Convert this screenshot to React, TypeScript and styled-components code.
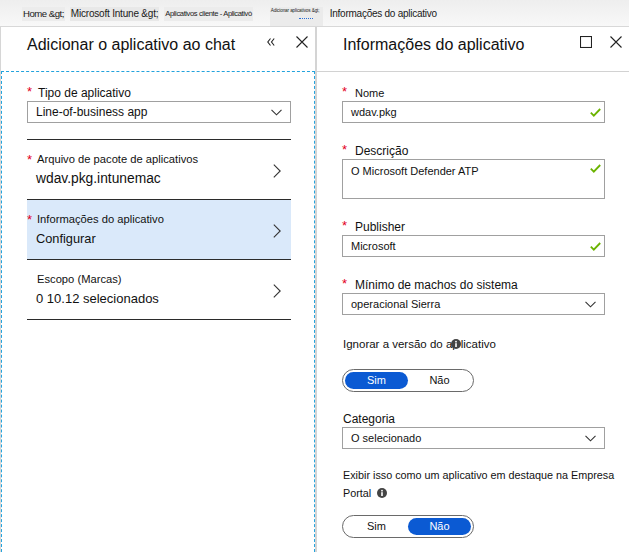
import React from "react";
import styled, { createGlobalStyle } from "styled-components";

const GlobalStyle = createGlobalStyle`
  html, body { margin: 0; padding: 0; background: #fff; }
  body { font-family: "Liberation Sans", Arial, sans-serif; color: #000; }
  * { box-sizing: border-box; }
`;

const Page = styled.div`
  width: 629px;
  height: 552px;
  display: flex;
  flex-direction: column;
  overflow: hidden;
  background: #fff;
`;

/* ---------- breadcrumb ---------- */
const Breadcrumb = styled.nav`
  height: 27px;
  flex: none;
  display: flex;
  align-items: center;
  padding: 2px 0 0 22px;
  background: linear-gradient(#eeeeee, #f8f8f8);
  border-bottom: 1px solid #d8d8d8;
  color: #1a1a1a;
`;

const Crumb = styled.span<{ $size: number; $ls: number; $bg?: string; $ml?: number }>`
  font-size: ${(p) => p.$size}px;
  letter-spacing: ${(p) => p.$ls}px;
  line-height: 14px;
  padding: 0 1px;
  margin-left: ${(p) => p.$ml ?? 6}px;
  background: ${(p) => p.$bg ?? "transparent"};
  white-space: nowrap;
  &:first-child { margin-left: 0; }
`;

const TinyCrumb = styled.span`
  align-self: stretch;
  margin: 5px 0 0 17px;
  width: 53px;
  background: #ebebeb;
  font-size: 4.6px;
  line-height: 8px;
  letter-spacing: -0.1px;
  padding-left: 1px;
  white-space: nowrap;
  overflow: hidden;
`;

const TinyDots = styled.span`
  display: block;
  margin: 3px 0 0 28px;
  width: 14px;
  height: 2px;
  border-top: 1px dotted #2a6fd6;
`;

/* ---------- blades ---------- */
const Blades = styled.div`
  flex: 1;
  display: flex;
  min-height: 0;
`;

const LeftBlade = styled.section`
  width: 317px;
  flex: none;
  display: flex;
  flex-direction: column;
  border-left: 1px solid #d6d6d6;
  border-right: 2px solid #d4d4d4;
`;

const RightBlade = styled.section`
  flex: 1;
  display: flex;
  flex-direction: column;
`;

const BladeHeader = styled.header<{ $line?: boolean }>`
  height: ${(p) => (p.$line ? 45 : 44)}px;
  flex: none;
  display: flex;
  align-items: flex-start;
  padding: 8px 7px 0 26px;
  border-bottom: ${(p) => (p.$line ? "1px solid #d2d2d2" : "none")};
`;

const BladeTitle = styled.h1`
  margin: 0;
  flex: 1;
  font-size: 16px;
  line-height: 20px;
  font-weight: normal;
  color: #111;
`;

const HeaderIcons = styled.div<{ $gap: number }>`
  display: flex;
  align-items: center;
  gap: ${(p) => p.$gap}px;
  padding-top: 1px;
`;

const IconBox = styled.span`
  display: inline-flex;
  align-items: center;
  justify-content: center;
  width: 12px;
  height: 12px;
`;

const LeftBody = styled.div`
  flex: 1;
  border: 1px dashed #23a3dd;
  border-bottom: none;
  padding: 13px 0 0 25px;
`;

const RightBody = styled.div`
  flex: 1;
  padding: 13px 0 0 25px;
`;

/* ---------- form parts ---------- */
const FieldLabel = styled.div<{ $mt?: number; $size?: number }>`
  display: flex;
  align-items: baseline;
  margin-top: ${(p) => p.$mt ?? 0}px;
  font-size: ${(p) => p.$size ?? 12}px;
  line-height: 16px;
  color: #111;
  white-space: nowrap;
`;

const Star = styled.span<{ $w: number }>`
  flex: none;
  width: ${(p) => p.$w}px;
  color: #e3001b;
  font-size: 13px;
  position: relative;
  top: -1px;
`;

const InputBox = styled.div<{ $w: number; $h?: number; $top?: boolean }>`
  width: ${(p) => p.$w}px;
  height: ${(p) => p.$h ?? 22}px;
  border: 1px solid #a0a0a0;
  display: flex;
  align-items: ${(p) => (p.$top ? "flex-start" : "center")};
  justify-content: space-between;
  padding: ${(p) => (p.$top ? "4px 3px 0 8px" : "0 3px 0 8px")};
  font-size: ${(p) => (p.$w > 263 ? 12 : 11)}px;
  line-height: 14px;
  color: #111;
  background: #fff;
`;

const SelectBox = styled(InputBox)`
  padding-right: 8px;
`;

const RowList = styled.div`
  width: 264px;
  margin-top: 16px;
  border-bottom: 1px solid #2b2b2b;
`;

const NavRow = styled.div<{ $active?: boolean }>`
  height: 60px;
  border-top: 1px solid #2b2b2b;
  background: ${(p) => (p.$active ? "#dae9fa" : "transparent")};
  display: grid;
  grid-template-columns: 10px 1fr 18px;
  grid-template-rows: 15px 18px;
  row-gap: 3px;
  padding-top: 12px;
  align-content: start;
`;

const RowStar = styled.span`
  grid-column: 1;
  grid-row: 1;
  color: #e3001b;
  font-size: 13px;
  line-height: 15px;
`;

const RowLabel = styled.span`
  grid-column: 2;
  grid-row: 1;
  font-size: 11.2px;
  line-height: 15px;
  color: #111;
  white-space: nowrap;
`;

const RowValue = styled.span<{ $size?: number }>`
  grid-column: 2;
  grid-row: 2;
  font-size: ${(p) => p.$size ?? 13.3}px;
  line-height: 18px;
  color: #111;
  white-space: nowrap;
  margin-left: -1px;
`;

const RowChevron = styled.span`
  grid-column: 3;
  grid-row: 1 / span 2;
  align-self: center;
  display: flex;
  margin-top: 2px;
`;

const PlainLabel = styled.div<{ $mt: number; $w?: number; $size?: number; $lh?: number }>`
  margin-top: ${(p) => p.$mt}px;
  width: ${(p) => p.$w ?? 263}px;
  font-size: ${(p) => p.$size ?? 11.5}px;
  line-height: ${(p) => p.$lh ?? 16}px;
  color: #111;
  padding-left: 1px;
`;

const Toggle = styled.div<{ $mt: number }>`
  margin-top: ${(p) => p.$mt}px;
  width: 132px;
  height: 23px;
  border: 1px solid #6a6a6a;
  border-radius: 12px;
  padding: 2px;
  display: grid;
  grid-template-columns: 1fr 1fr;
`;

const ToggleOption = styled.span<{ $on?: boolean }>`
  border-radius: 9px;
  background: ${(p) => (p.$on ? "#0b5ad3" : "transparent")};
  color: ${(p) => (p.$on ? "#fff" : "#111")};
  font-size: 11px;
  line-height: 17px;
  text-align: center;
`;

const InfoDot = styled.span<{ $ml: number }>`
  display: inline-flex;
  vertical-align: -1px;
  margin-left: ${(p) => p.$ml}px;
`;

/* ---------- icons ---------- */
const Chevron = () => (
  <svg width="11" height="7" viewBox="0 0 11 7">
    <polyline points="0.5,0.8 5.5,5.8 10.5,0.8" fill="none" stroke="#333" strokeWidth="1.1" />
  </svg>
);

const RightArrow = () => (
  <svg width="8" height="14" viewBox="0 0 8 14">
    <polyline points="0.8,0.6 7.2,7 0.8,13.4" fill="none" stroke="#333" strokeWidth="1.1" />
  </svg>
);

const CloseIcon = () => (
  <svg width="12" height="12" viewBox="0 0 12 12">
    <path d="M0.5 0.5 L11.5 11.5 M11.5 0.5 L0.5 11.5" stroke="#222" strokeWidth="1.1" fill="none" />
  </svg>
);

const MaxIcon = () => (
  <svg width="12" height="12" viewBox="0 0 12 12">
    <rect x="0.5" y="0.5" width="11" height="11" fill="none" stroke="#222" strokeWidth="1.1" />
  </svg>
);

const CollapseIcon = () => (
  <svg width="8" height="8" viewBox="0 0 8 8">
    <path d="M3.5 0.5 L0.8 4 L3.5 7.5 M7.2 0.5 L4.5 4 L7.2 7.5" stroke="#222" strokeWidth="1.1" fill="none" />
  </svg>
);

const Check = () => (
  <svg width="11" height="9" viewBox="0 0 11 9">
    <polyline points="0.8,4.6 3.8,7.6 10.2,1" fill="none" stroke="#6bb300" strokeWidth="1.8" />
  </svg>
);

const Info = () => (
  <svg width="10" height="10" viewBox="0 0 10 10">
    <circle cx="5" cy="5" r="5" fill="#444" />
    <rect x="4.2" y="4.2" width="1.6" height="3.8" fill="#fff" />
    <circle cx="5" cy="2.7" r="0.9" fill="#fff" />
  </svg>
);

export default function App() {
  return (
    <Page>
      <GlobalStyle />
      <Breadcrumb>
        <Crumb $size={9.6} $ls={-0.5} $bg="#ececec">Home &amp;gt;</Crumb>
        <Crumb $size={10} $ls={-0.2} $bg="#e8e8e8" $ml={5}>Microsoft Intune &amp;gt;</Crumb>
        <Crumb $size={7.6} $ls={-0.4} $bg="#ececec" $ml={5}>Aplicativos cliente - Aplicativò</Crumb>
        <TinyCrumb>
          Adicionar aplicativos &amp;gt;
          <TinyDots />
        </TinyCrumb>
        <Crumb $size={10} $ls={-0.25} $ml={6}>Informações do aplicativo</Crumb>
      </Breadcrumb>

      <Blades>
        <LeftBlade>
          <BladeHeader>
            <BladeTitle>Adicionar o aplicativo ao chat</BladeTitle>
            <HeaderIcons $gap={19}>
              <IconBox><CollapseIcon /></IconBox>
              <IconBox><CloseIcon /></IconBox>
            </HeaderIcons>
          </BladeHeader>
          <LeftBody>
            <FieldLabel>
              <Star $w={11}>*</Star>Tipo de aplicativo
            </FieldLabel>
            <SelectBox $w={264}>
              <span>Line-of-business app</span>
              <Chevron />
            </SelectBox>
            <RowList>
              <NavRow>
                <RowStar>*</RowStar>
                <RowLabel>Arquivo de pacote de aplicativos</RowLabel>
                <RowValue $size={13.8}>wdav.pkg.intunemac</RowValue>
                <RowChevron><RightArrow /></RowChevron>
              </NavRow>
              <NavRow $active>
                <RowStar>*</RowStar>
                <RowLabel>Informações do aplicativo</RowLabel>
                <RowValue $size={12.8}>Configurar</RowValue>
                <RowChevron><RightArrow /></RowChevron>
              </NavRow>
              <NavRow>
                <RowLabel>Escopo (Marcas)</RowLabel>
                <RowValue $size={13}>0 10.12 selecionados</RowValue>
                <RowChevron><RightArrow /></RowChevron>
              </NavRow>
            </RowList>
          </LeftBody>
        </LeftBlade>

        <RightBlade>
          <BladeHeader $line>
            <BladeTitle>Informações do aplicativo</BladeTitle>
            <HeaderIcons $gap={18}>
              <IconBox><MaxIcon /></IconBox>
              <IconBox><CloseIcon /></IconBox>
            </HeaderIcons>
          </BladeHeader>
          <RightBody>
            <FieldLabel $size={11}>
              <Star $w={13}>*</Star>Nome
            </FieldLabel>
            <InputBox $w={263}>
              <span>wdav.pkg</span>
              <Check />
            </InputBox>

            <FieldLabel $mt={20}>
              <Star $w={13}>*</Star>Descrição
            </FieldLabel>
            <InputBox $w={263} $h={40} $top>
              <span>O Microsoft Defender ATP</span>
              <Check />
            </InputBox>

            <FieldLabel $mt={20}>
              <Star $w={13}>*</Star>Publisher
            </FieldLabel>
            <InputBox $w={263}>
              <span>Microsoft</span>
              <Check />
            </InputBox>

            <FieldLabel $mt={20}>
              <Star $w={13}>*</Star>Mínimo de machos do sistema
            </FieldLabel>
            <SelectBox $w={263}>
              <span>operacional Sierra</span>
              <Chevron />
            </SelectBox>

            <PlainLabel $mt={21}>
              Ignorar a versão do ap
              <InfoDot $ml={-8}><Info /></InfoDot>licativo
            </PlainLabel>
            <Toggle $mt={17}>
              <ToggleOption $on>Sim</ToggleOption>
              <ToggleOption>Não</ToggleOption>
            </Toggle>

            <PlainLabel $mt={19} $size={12}>Categoria</PlainLabel>
            <SelectBox $w={263}>
              <span>O selecionado</span>
              <Chevron />
            </SelectBox>

            <PlainLabel $mt={17} $w={285} $size={10.8} $lh={18}>
              Exibir isso como um aplicativo em destaque na Empresa Portal
              <InfoDot $ml={6}><Info /></InfoDot>
            </PlainLabel>
            <Toggle $mt={13}>
              <ToggleOption>Sim</ToggleOption>
              <ToggleOption $on>Não</ToggleOption>
            </Toggle>
          </RightBody>
        </RightBlade>
      </Blades>
    </Page>
  );
}
